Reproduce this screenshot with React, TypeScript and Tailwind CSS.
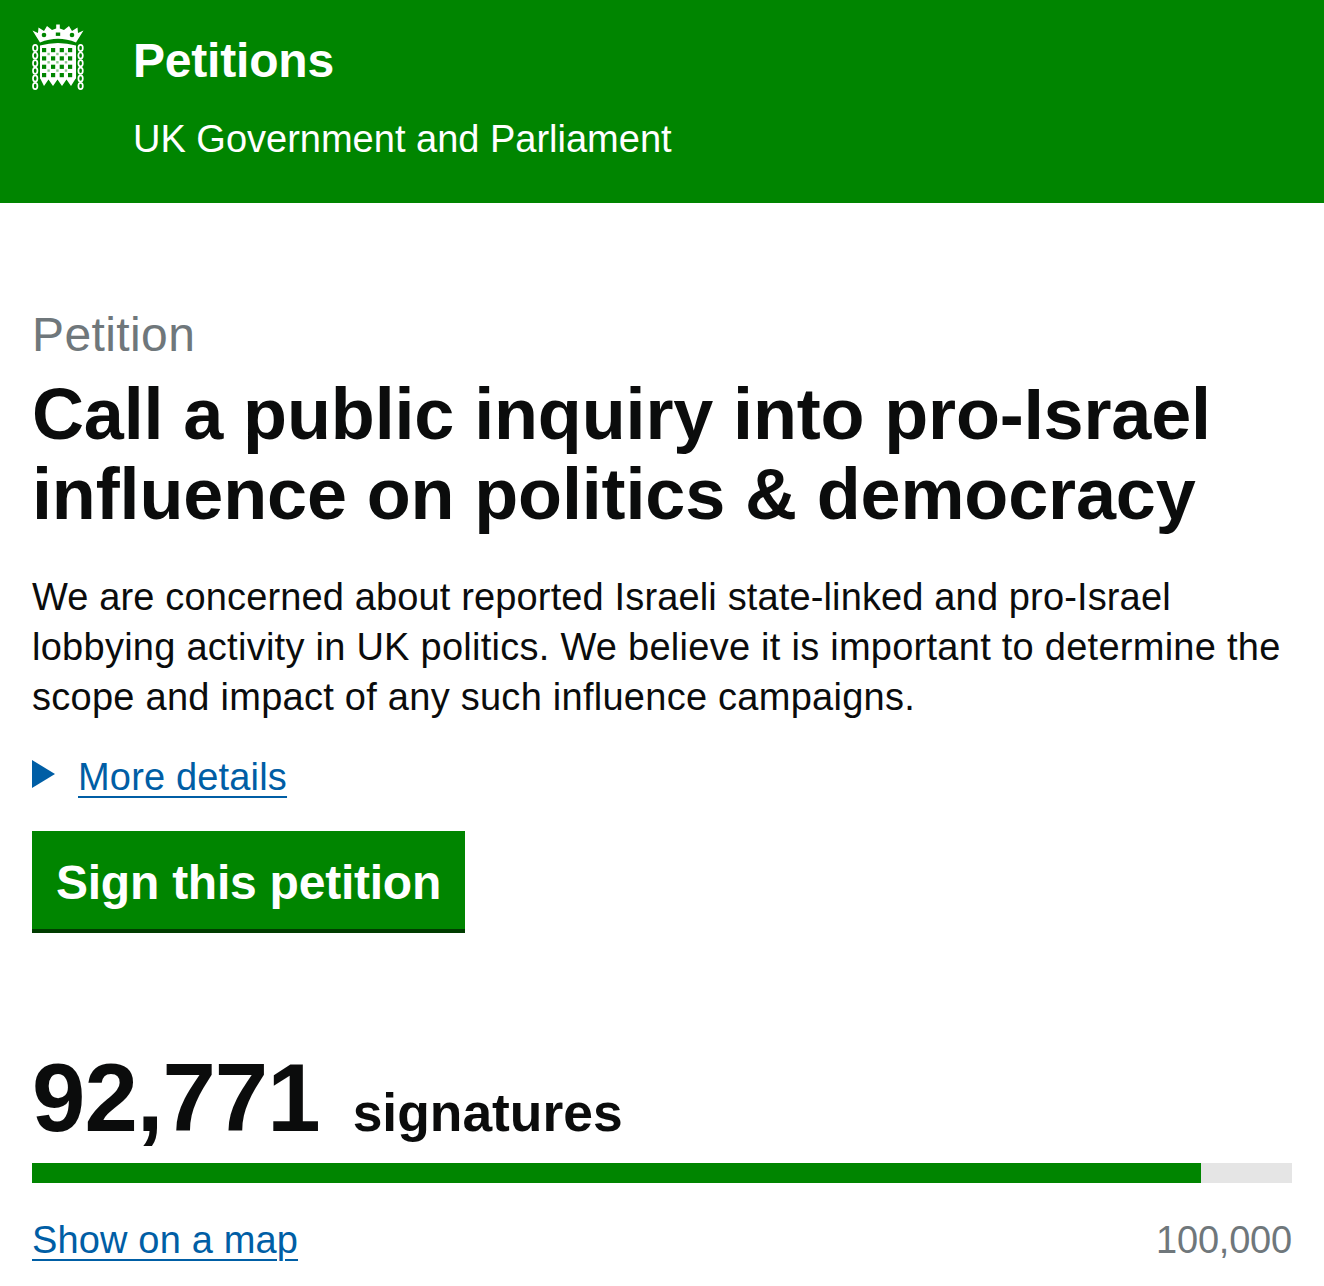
const Logo = () => {
  const holes: React.ReactNode[] = [];
  const xs = [10, 19, 27.7, 36];
  const ys = [24, 32.3, 40.7, 49];
  ys.forEach((y, r) =>
    xs.forEach((x, c) => {
      holes.push(<rect key={`h${r}-${c}`} x={x} y={y} width="4.2" height="4.2" fill="#008500" />);
    })
  );
  const dots: React.ReactNode[] = [];
  [15.4, 24.2, 32.8].forEach((x, c) =>
    [28.8, 37.1, 45.4].forEach((y, r) => {
      dots.push(<rect key={`d${r}-${c}`} x={x} y={y} width="2.4" height="2.4" fill="#008500" opacity="0.45" />);
    })
  );
  const links = [0, 1, 2, 3, 4, 5];
  return (
    <svg width="54" height="66" viewBox="0 0 54 66" className="block shrink-0">
      <g fill="none" stroke="#fff" strokeWidth="1.7">
        {links.map((i) => (
          <g key={i}>
            <ellipse cx="3.2" cy={24 + i * 7.6} rx="2.2" ry="3.1" />
            <ellipse cx="48.6" cy={24 + i * 7.6} rx="2.2" ry="3.1" />
          </g>
        ))}
      </g>
      <path d="M0.5 6.5 L6 9 L6.5 3.5 L12 7 L15 2 L20 6 L24.2 4.5 V0.5 H27.8 V4.5 L32 6 L37 2 L40 7 L45.5 3.5 L46 9 L51.5 6.5 L44 18.5 Q26 11 8 18.5 Z" fill="#fff" />
      <circle cx="12" cy="11" r="2.3" fill="#008500" />
      <circle cx="40" cy="11" r="2.3" fill="#008500" />
      <path d="M23.8 8.5 h4.4 v3.4 h-4.4z" fill="#008500" />
      <path d="M8 21.5 Q26 16.5 44 21.5 V54.5 H8 Z" fill="#fff" />
      {holes}
      {dots}
      <path d="M8 54 L12 62 L16.5 55.5 L21 62 L25.5 55.5 L30 62 L34.5 55.5 L39 62 L44 54 Z" fill="#fff" />
    </svg>
  );
};

export default function App() {
  return (
    <div className="min-h-[1286px] bg-white font-['Liberation_Sans',Arial,sans-serif] text-[#0b0c0c] overflow-hidden">
      <header className="h-[203px] bg-[#008500] text-white pl-[32px] flex">
        <div className="pt-[24px] w-[101px] shrink-0">
          <Logo />
        </div>
        <div>
          <div className="mt-[32px] text-[48px] leading-[58px] font-bold tracking-[-0.2px]">Petitions</div>
          <div className="mt-[29px] text-[38px] leading-[40px]">UK Government and Parliament</div>
        </div>
      </header>
      <main className="px-[32px]">
        <div className="mt-[106px] text-[48px] leading-[52px] text-[#6f777b] tracking-[0.4px]">Petition</div>
        <h1 className="mt-[13px] text-[72px] leading-[80px] font-bold tracking-[-0.14px]">
          Call a public inquiry into pro-Israel<br />influence on politics &amp; democracy
        </h1>
        <p className="mt-[38px] text-[38px] leading-[50px] tracking-[0.26px]">
          <span className="tracking-[0.14px]">We are concerned about reported Israeli state-linked and pro-Israel</span><br />
          lobbying activity in UK politics. We believe it is important to determine the<br />
          scope and impact of any such influence campaigns.
        </p>
        <div className="mt-[30px] flex items-center h-[50px]">
          <span className="block w-0 h-0 border-y-[14px] border-y-transparent border-l-[23px] border-l-[#005ea5] mr-[23px] -mt-[6px]" />
          <a className="text-[38px] leading-[50px] text-[#005ea5] underline decoration-2 underline-offset-[6px] tracking-[0.17px]">More details</a>
        </div>
        <div className="mt-[29px] inline-block bg-[#008500] text-white border-b-[4px] border-[#003c00] h-[102px] px-[24px] text-[48px] leading-[104px] font-bold tracking-[-0.24px]">
          Sign this petition
        </div>
        <div className="mt-[116px] flex items-baseline h-[98px]">
          <span className="text-[96px] leading-[98px] font-bold tracking-[-1px]">92,771</span>
          <span className="ml-[33px] text-[53.4px] font-bold">signatures</span>
        </div>
        <div className="mt-[16px] h-[20px] bg-[#e5e5e5]">
          <div className="h-full bg-[#008500]" style={{ width: "92.77%" }} />
        </div>
        <div className="mt-[27px] flex justify-between">
          <a className="text-[38px] leading-[60px] text-[#005ea5] underline decoration-2 underline-offset-[6px] tracking-[0.15px]">Show on a map</a>
          <span className="text-[38px] leading-[60px] text-[#6f777b] tracking-[-0.2px]">100,000</span>
        </div>
      </main>
    </div>
  );
}
